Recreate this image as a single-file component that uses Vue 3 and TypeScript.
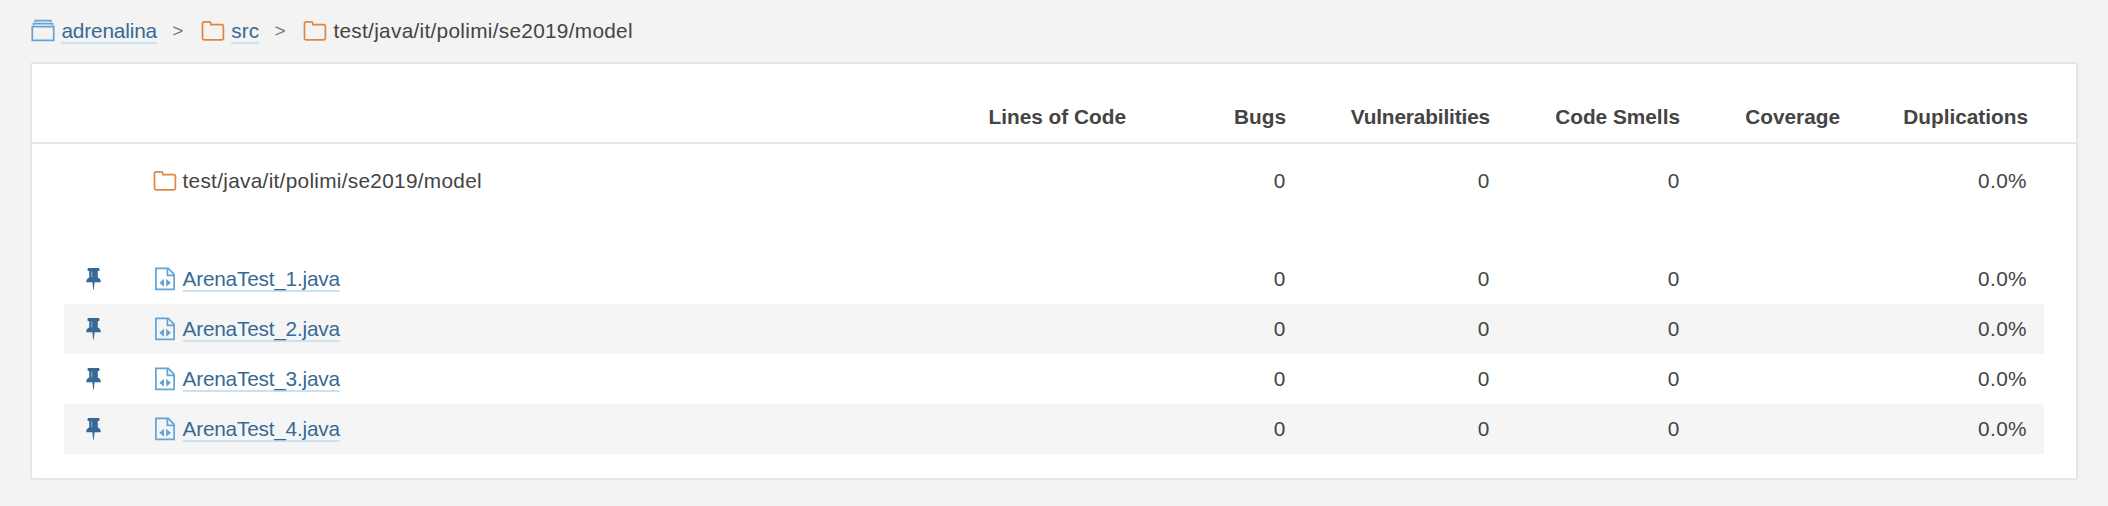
<script setup lang="ts">
interface Crumb {
  label: string
  kind: 'project' | 'folder'
  current?: boolean
  style: string
}

interface Metric {
  title: string
  value: string
}

const crumbs: Crumb[] = [
  { label: 'adrenalina', kind: 'project', style: 'crumb-project' },
  { label: 'src', kind: 'folder', style: 'crumb-src' },
  { label: 'test/java/it/polimi/se2019/model', kind: 'folder', current: true, style: 'path' },
]

const metrics: Metric[] = [
  { title: 'Lines of Code', value: '' },
  { title: 'Bugs', value: '0' },
  { title: 'Vulnerabilities', value: '0' },
  { title: 'Code Smells', value: '0' },
  { title: 'Coverage', value: '' },
  { title: 'Duplications', value: '0.0%' },
]

const files: string[] = ['ArenaTest_1.java', 'ArenaTest_2.java', 'ArenaTest_3.java', 'ArenaTest_4.java']
</script>

<template>
  <div class="page">
    <nav class="crumbs">
      <template v-for="(crumb, i) in crumbs" :key="crumb.label">
        <span v-if="i > 0" class="sep">&gt;</span>
        <svg v-if="crumb.kind === 'project'" class="icon project" viewBox="0 0 24 24">
          <path d="M4.2 3.1V1.7h15.6v1.4M2.5 6.2V4.7h19v1.5" />
          <path d="M1.3 7.7h21.4v13.6h-21.4z" />
        </svg>
        <svg v-else class="icon folder" viewBox="0 0 24 24">
          <path d="M3.1 2.8h5.2a1.5 1.5 0 0 1 1.5 1.5v1.3h11a1.6 1.6 0 0 1 1.6 1.6v12a1.7 1.7 0 0 1-1.7 1.7H3.2a1.7 1.7 0 0 1-1.7-1.7V4.4a1.6 1.6 0 0 1 1.6-1.6z" />
        </svg>
        <span v-if="crumb.current" class="label" :class="crumb.style">{{ crumb.label }}</span>
        <a v-else class="link" :class="crumb.style">{{ crumb.label }}</a>
      </template>
    </nav>

    <main class="card">
      <div class="row head">
        <span class="pin-cell"></span>
        <span class="name"></span>
        <span v-for="m in metrics" :key="m.title" class="num" :class="{ tight: m.title === 'Vulnerabilities' }">{{ m.title }}</span>
      </div>
      <div class="row base">
        <span class="pin-cell"></span>
        <span class="name">
          <svg class="icon folder" viewBox="0 0 24 24">
            <path d="M3.1 2.8h5.2a1.5 1.5 0 0 1 1.5 1.5v1.3h11a1.6 1.6 0 0 1 1.6 1.6v12a1.7 1.7 0 0 1-1.7 1.7H3.2a1.7 1.7 0 0 1-1.7-1.7V4.4a1.6 1.6 0 0 1 1.6-1.6z" />
          </svg>
          <span class="label path">test/java/it/polimi/se2019/model</span>
        </span>
        <span v-for="m in metrics" :key="m.title" class="num value" :class="{ wide: m.value.length > 1 }">{{ m.value }}</span>
      </div>
      <div class="files">
        <div v-for="file in files" :key="file" class="row file">
          <span class="pin-cell">
            <svg class="pin" viewBox="0 0 15 22">
              <path d="M2.500 0h10c.7 0 1 .5 1 1.500s-.3 1.500-1 1.500h-.7v6.500c2 .8 3 2.200 3 4.800H8.600L7.800 21.700h-.6L6.400 14.300H.2c0-2.600 1-4 3-4.800V3h-.7c-.7 0-1-.5-1-1.500S1.800 0 2.500 0z" />
              <path class="shine" d="M5.400 3.500h.8v5.800h-.8z" />
            </svg>
          </span>
          <span class="name">
            <svg class="icon source" viewBox="0 0 24 24">
              <path d="M2.900 1.300h12.300l5.900 6v15H2.900z" />
              <path d="M14.400 1.500v6.800h6.600" />
              <path class="solid" d="M11 11.800v8l-4.700-4zM13.200 11.800v8l4.700-4z" />
            </svg>
            <a class="link file-link">{{ file }}</a>
          </span>
          <span v-for="m in metrics" :key="m.title" class="num value" :class="{ wide: m.value.length > 1 }">{{ m.value }}</span>
        </div>
      </div>
    </main>
  </div>
</template>

<style>
body {
  background: #f3f3f3;
}
</style>

<style scoped>
.page {
  box-sizing: border-box;
  height: 506px;
  padding: 0 30px;
  background: #f3f3f3;
  color: #444;
  font-family: "Liberation Sans", Arial, sans-serif;
  font-size: 20.8px;
}

.crumbs {
  display: flex;
  align-items: center;
  height: 62px;
}

.icon {
  flex: none;
  width: 24px;
  height: 24px;
  margin-right: 5.5px;
  fill: none;
  stroke-width: 1.7;
}

.crumbs .folder {
  margin-right: 6.3px;
}

.project {
  margin-left: 1px;
  margin-right: 6.4px;
}

.project,
.source {
  stroke: #64a3d4;
}

.folder {
  stroke: #e2853e;
}

.solid {
  fill: #64a3d4;
  stroke: none;
}

.link {
  margin-top: 2px;
  line-height: 22px;
  border-bottom: 2px solid #cae3f2;
  color: #366a94;
  white-space: nowrap;
}

.label {
  white-space: nowrap;
}

.crumb-project {
  letter-spacing: -0.15px;
}

.crumb-src {
  letter-spacing: 0.1px;
}

.path {
  letter-spacing: 0.29px;
}

.file-link {
  letter-spacing: -0.21px;
}

.sep {
  flex: none;
  width: 43.9px;
  box-sizing: border-box;
  padding-left: 15.3px;
  color: #777;
  font-size: 19px;
}

.card {
  box-sizing: border-box;
  height: 418px;
  border: 2px solid #e6e6e6;
  border-radius: 3px;
  background: #fff;
}

.row {
  display: grid;
  grid-template-columns: 89px 813px 160px 160px 204px 190px 160px 188px;
  align-items: center;
  height: 50px;
  margin: 0 32px;
}

.head {
  box-sizing: border-box;
  height: 80px;
  margin: 0;
  padding: 28px 32px 0;
  border-bottom: 2px solid #e6e6e6;
  font-weight: 700;
}

.base {
  margin-top: 12px;
  margin-bottom: 48px;
}

.file:nth-child(even) {
  background: #f5f5f5;
}

.name {
  display: flex;
  align-items: center;
}

.num {
  text-align: right;
  white-space: nowrap;
}

.value {
  padding-right: 0.8px;
}

.tight {
  letter-spacing: -0.14px;
}

.wide {
  padding-right: 1px;
  letter-spacing: 0.4px;
}

.pin-cell {
  display: flex;
  padding-left: 21.5px;
}

.pin {
  width: 15px;
  height: 22px;
  fill: #366a94;
}

.pin .shine {
  fill: #a9c3d6;
}
</style>
